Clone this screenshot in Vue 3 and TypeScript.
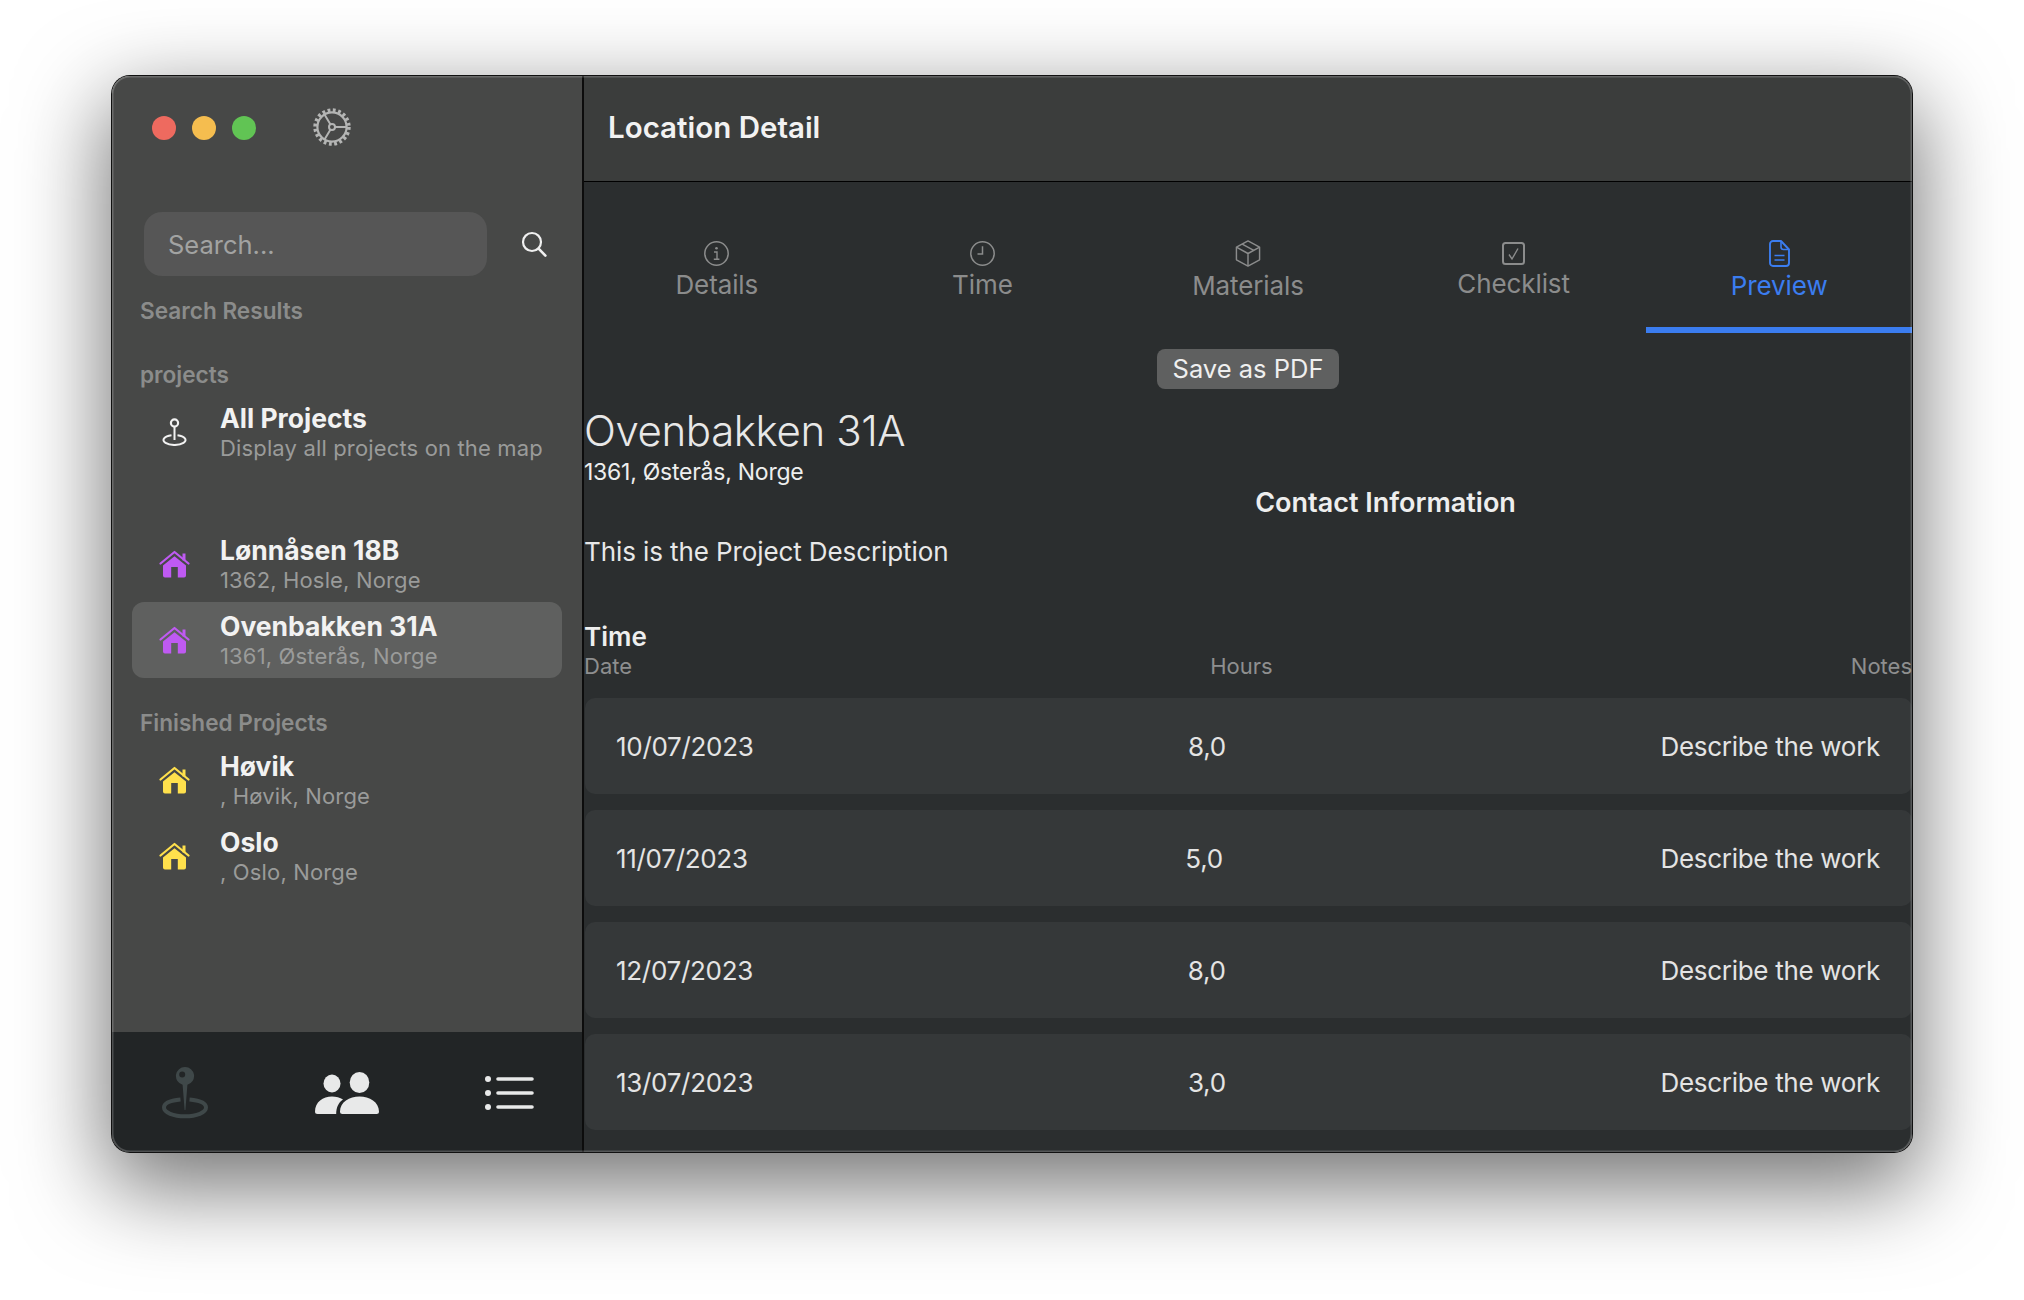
<script setup lang="ts">
interface Project {
  name: string
  address: string
  selected?: boolean
}

interface TimeRow {
  date: string
  hours: string
  notes: string
}

const activeProjects: Project[] = [
  { name: 'Lønnåsen 18B', address: '1362, Hosle, Norge' },
  { name: 'Ovenbakken 31A', address: '1361, Østerås, Norge', selected: true }
]

const finishedProjects: Project[] = [
  { name: 'Høvik', address: ', Høvik, Norge' },
  { name: 'Oslo', address: ', Oslo, Norge' }
]

const timeRows: TimeRow[] = [
  { date: '10/07/2023', hours: '8,0', notes: 'Describe the work' },
  { date: '11/07/2023', hours: '5,0', notes: 'Describe the work' },
  { date: '12/07/2023', hours: '8,0', notes: 'Describe the work' },
  { date: '13/07/2023', hours: '3,0', notes: 'Describe the work' }
]
</script>

<template>
  <div class="page">
    <div class="window">
      <aside class="sidebar">
        <div class="titlebar">
          <span class="light red"></span>
          <span class="light yellow"></span>
          <span class="light green"></span>
          <svg class="gear" width="38" height="38" viewBox="0 0 38 38" fill="none" stroke="#b4b5b4">
            <circle cx="19" cy="19" r="16.8" stroke-width="3.8" stroke-dasharray="2.8 2.5" />
            <circle cx="19" cy="19" r="14.6" stroke-width="2.2" />
            <circle cx="19" cy="19" r="3" stroke-width="2" />
            <path d="M22 19H33M17.5 16.4 11.5 6.5M17.5 21.6 11.5 31.5" stroke-width="2" />
          </svg>
        </div>

        <div class="search-row">
          <div class="search-box">Search...</div>
          <svg class="search-icon" width="26" height="26" viewBox="0 0 26 26" fill="none" stroke="#f0f0f0" stroke-width="2.2" stroke-linecap="round">
            <circle cx="11" cy="11" r="9" />
            <path d="M17.6 17.6 24.4 24.6" stroke-width="2.6" />
          </svg>
        </div>

        <div class="group-label first">Search Results</div>
        <div class="group-label projects">projects</div>

        <div class="project-row all-row">
          <span class="row-icon">
            <svg width="25" height="28" viewBox="0 0 25 28" fill="none" stroke="#f2f2f2">
              <circle cx="12.5" cy="5" r="3.6" stroke-width="2.2" />
              <path d="M12.5 9V22" stroke-width="2" />
              <path d="M9.5 17.2A11 5 0 1 0 15.5 17.2" stroke-width="2" />
            </svg>
          </span>
          <div>
            <div class="project-name">All Projects</div>
            <div class="project-address">Display all projects on the map</div>
          </div>
        </div>

        <div
          v-for="project in activeProjects"
          :key="project.name"
          class="project-row"
          :class="{ selected: project.selected }"
        >
          <span class="row-icon">
            <svg width="31" height="28" viewBox="0 0 31 28">
              <path d="M1.5 13.5 15.5 2 29.5 13.5" fill="none" stroke="#bf5af2" stroke-width="2.2" stroke-linecap="round" stroke-linejoin="round" />
              <path d="M23.5 3.5h3v7h-3z" fill="#bf5af2" />
              <path fill-rule="evenodd" d="M15.5 6.2 27 15.6V25.5a2 2 0 0 1-2 2H6a2 2 0 0 1-2-2V15.6ZM12.2 17v10.5h6.6V17Z" fill="#bf5af2" />
            </svg>
          </span>
          <div>
            <div class="project-name">{{ project.name }}</div>
            <div class="project-address">{{ project.address }}</div>
          </div>
        </div>

        <div class="group-label finished">Finished Projects</div>

        <div v-for="project in finishedProjects" :key="project.name" class="project-row">
          <span class="row-icon">
            <svg width="31" height="28" viewBox="0 0 31 28">
              <path d="M1.5 13.5 15.5 2 29.5 13.5" fill="none" stroke="#ffe04c" stroke-width="2.2" stroke-linecap="round" stroke-linejoin="round" />
              <path d="M23.5 3.5h3v7h-3z" fill="#ffe04c" />
              <path fill-rule="evenodd" d="M15.5 6.2 27 15.6V25.5a2 2 0 0 1-2 2H6a2 2 0 0 1-2-2V15.6ZM12.2 17v10.5h6.6V17Z" fill="#ffe04c" />
            </svg>
          </span>
          <div>
            <div class="project-name">{{ project.name }}</div>
            <div class="project-address">{{ project.address }}</div>
          </div>
        </div>

        <nav class="footer-bar">
          <svg width="46" height="52" viewBox="0 0 46 52" fill="none">
            <path fill-rule="evenodd" d="M23 0a9 9 0 0 1 2.4 17.7L23.4 43h-.8L20.6 17.7A9 9 0 0 1 23 0Zm-2.8 4.5a3 3 0 1 0 0 6 3 3 0 0 0 0-6Z" fill="#3f4849" />
            <path d="M18.5 32.6C8 33.6 2 36.5 2 40.6c0 5 9.4 8.6 21 8.6s21-3.6 21-8.6c0-4.1-6-7-16.5-8" stroke="#3f4849" stroke-width="4" />
          </svg>
          <svg width="64" height="42" viewBox="0 0 64 42" fill="#e8e9e9">
            <ellipse cx="17" cy="11.5" rx="8.5" ry="9" />
            <ellipse cx="44.5" cy="10.5" rx="9.8" ry="10.5" />
            <path d="M0 39.5C0 30 8 24.5 17 24.5c4 0 8 1 11 3-4.5 3-6.8 8-6.8 14.5H2.5A2.5 2.5 0 0 1 0 39.5Z" />
            <path d="M25 39.5C25 30 34.5 24.5 44.5 24.5S64 30 64 39.5a2.5 2.5 0 0 1-2.5 2.5h-34A2.5 2.5 0 0 1 25 39.5Z" />
          </svg>
          <svg width="50" height="34" viewBox="0 0 50 34" fill="#e8e9e9" stroke="#e8e9e9">
            <circle cx="3" cy="3" r="3" stroke="none" />
            <circle cx="3" cy="17" r="3" stroke="none" />
            <circle cx="3" cy="31" r="3" stroke="none" />
            <path d="M13 3H47M13 17H47M13 31H47" stroke-width="3.6" stroke-linecap="round" />
          </svg>
        </nav>
      </aside>

      <main class="detail">
        <header class="detail-header">Location Detail</header>

        <div class="tabs">
          <div class="tab">
            <svg width="27" height="25" viewBox="0 0 27 25" fill="none" stroke="#8b8c8c" stroke-width="1.5">
              <circle cx="13.5" cy="12.5" r="11.7" />
              <circle cx="13.5" cy="7.2" r="1.3" fill="#8b8c8c" stroke="none" />
              <path d="M11 11h3v7M10.8 18.2h5.6" stroke-width="1.4" />
            </svg>
            <span>Details</span>
          </div>
          <div class="tab">
            <svg width="27" height="25" viewBox="0 0 27 25" fill="none" stroke="#8b8c8c" stroke-width="1.5">
              <circle cx="13.5" cy="12.5" r="11.7" />
              <path d="M13.5 5.2V13H8.5" />
            </svg>
            <span>Time</span>
          </div>
          <div class="tab">
            <svg width="26" height="27" viewBox="0 0 26 28" fill="none" stroke="#8b8c8c" stroke-width="1.5" stroke-linejoin="round">
              <path d="M13 1 25 7.5V20.5L13 27 1 20.5V7.5Z" />
              <path d="M1.4 7.6 13 14 24.6 7.6M13 14V26.6M7 4.2 19 10.8" />
            </svg>
            <span>Materials</span>
          </div>
          <div class="tab">
            <svg width="23" height="23" viewBox="0 0 23 23" fill="none" stroke="#8b8c8c">
              <rect x="1" y="1" width="21" height="21" rx="2.5" stroke-width="2" />
              <path d="M7 12.5 10 17 16 6.5" stroke-width="1.4" />
            </svg>
            <span>Checklist</span>
          </div>
          <div class="tab active">
            <svg width="21" height="27" viewBox="0 0 21 27" fill="none" stroke="#3b7df0" stroke-width="1.9" stroke-linejoin="round">
              <path d="M4 1H12L20 9.5V23a3 3 0 0 1-3 3H4a3 3 0 0 1-3-3V4a3 3 0 0 1 3-3Z" />
              <path d="M12 1V7a2.5 2.5 0 0 0 2.5 2.5H20M5.5 15.5H15.5M5.5 20H15.5" stroke-width="1.6" />
            </svg>
            <span>Preview</span>
          </div>
        </div>

        <div class="preview">
          <button class="pdf-button">Save as PDF</button>

          <h1 class="preview-title">Ovenbakken 31A</h1>
          <div class="preview-address">1361, Østerås, Norge</div>
          <h3 class="contact-title">Contact Information</h3>
          <p class="description">This is the Project Description</p>

          <div class="time-title">Time</div>
          <div class="time-head">
            <span>Date</span>
            <span>Hours</span>
            <span>Notes</span>
          </div>

          <div class="time-list">
            <div v-for="row in timeRows" :key="row.date" class="time-row">
              <span>{{ row.date }}</span>
              <span>{{ row.hours }}</span>
              <span>{{ row.notes }}</span>
            </div>
          </div>
        </div>
      </main>
    </div>
  </div>
</template>

<style scoped>
.page {
  width: 2024px;
  height: 1300px;
  box-sizing: border-box;
  padding: 76px 0 0 112px;
  overflow: hidden;
  background: #ffffff;
  font-family: Inter, "Liberation Sans", sans-serif;
}

.window {
  position: relative;
  display: flex;
  width: 1800px;
  height: 1076px;
  border-radius: 18px;
  overflow: hidden;
  box-shadow:
    0 0 0 1px #111111,
    0 30px 88px 6px rgba(0, 0, 0, 0.55);
}

/* thin light edge just inside the black outline */
.window::after {
  content: '';
  position: absolute;
  inset: 0;
  border-radius: 18px;
  box-shadow: inset 0 0 0 1.5px rgba(255, 255, 255, 0.2);
  pointer-events: none;
}

.sidebar {
  display: flex;
  flex-direction: column;
  flex: none;
  box-sizing: border-box;
  width: 472px;
  background: #474847;
  border-right: 2px solid #0c0c0c;
}

.titlebar {
  display: flex;
  align-items: center;
  flex: none;
  height: 104px;
  padding: 0 0 0 40px;
}

.light {
  width: 24px;
  height: 24px;
  margin-right: 16px;
  border-radius: 50%;
}

.red {
  background: #ee6a5f;
}

.yellow {
  background: #f5bd4f;
}

.green {
  background: #61c454;
}

.gear {
  margin: -2px 0 0 41px;
}

.search-row {
  display: flex;
  align-items: center;
  margin: 32px 0 0 32px;
}

.search-box {
  box-sizing: border-box;
  width: 343px;
  height: 64px;
  padding: 1px 0 0 24px;
  border-radius: 18px;
  background: #565656;
  color: #a2a3a2;
  font-size: 25.5px;
  line-height: 64px;
}

.search-icon {
  margin-left: 34px;
}

.group-label {
  padding-left: 28px;
  color: #8b8c8b;
  font-size: 22.6px;
  font-weight: 600;
  line-height: 30px;
}

.first {
  margin-top: 20px;
}

.projects {
  margin: 34px 0 3px;
}

.finished {
  margin: 30px 0 4px;
}

.project-row {
  display: flex;
  align-items: center;
  flex: none;
  box-sizing: border-box;
  height: 76px;
  margin: 0 20px;
  padding-left: 27px;
  border-radius: 12px;
}

.all-row {
  margin-bottom: 57px;
  padding-top: 2px;
}

.selected {
  background: #5f605f;
}

.row-icon {
  display: flex;
  justify-content: center;
  flex: none;
  width: 31px;
  margin-right: 30px;
}

.project-name {
  margin-top: 3px;
  color: #f2f2f2;
  font-size: 26.5px;
  font-weight: 700;
  line-height: 29px;
}

.project-address {
  color: #9a9b9a;
  font-size: 22px;
  letter-spacing: 0.15px;
  line-height: 30px;
}

.footer-bar {
  display: flex;
  align-items: center;
  justify-content: space-between;
  flex: none;
  box-sizing: border-box;
  height: 120px;
  margin-top: auto;
  padding: 2px 47px 0 50px;
  background: #222526;
}

.detail {
  display: flex;
  flex-direction: column;
  flex: 1;
  min-width: 0;
  background: #2b2e2f;
}

.detail-header {
  flex: none;
  box-sizing: border-box;
  height: 105.5px;
  padding: 33px 0 0 24px;
  border-bottom: 1.5px solid #000000;
  background: #3b3d3c;
  color: #f2f2f2;
  font-size: 29.5px;
  font-weight: 600;
  line-height: 36px;
}

.tabs {
  display: grid;
  grid-template-columns: repeat(5, 1fr);
  flex: none;
}

.tab {
  display: flex;
  flex-direction: column;
  align-items: center;
  justify-content: center;
  gap: 4px;
  box-sizing: border-box;
  height: 151.5px;
  padding-top: 32px;
  border-bottom: 6px solid transparent;
  color: #8b8c8c;
  font-size: 26px;
  letter-spacing: -0.1px;
  line-height: 30px;
}

.active {
  border-bottom-color: #3b7df0;
  color: #3b7df0;
}

.preview {
  display: flex;
  flex-direction: column;
}

.pdf-button {
  align-self: center;
  width: 182px;
  height: 40px;
  margin-top: 16px;
  padding: 0;
  border: 0;
  border-radius: 8px;
  background: #5f6060;
  color: #efefef;
  font-family: inherit;
  font-size: 25.5px;
  line-height: 40px;
}

.preview-title {
  margin: 15px 0 0;
  color: #e8e8e8;
  font-size: 42px;
  font-weight: 300;
  letter-spacing: -0.4px;
  line-height: 54px;
}

.preview-address {
  margin-top: -1px;
  color: #eeeeee;
  font-size: 23px;
  letter-spacing: -0.25px;
  line-height: 30px;
}

.contact-title {
  margin: 0;
  padding: 1px 0 0 275px;
  color: #eeeeee;
  font-size: 27px;
  font-weight: 600;
  line-height: 30px;
  text-align: center;
}

.description {
  margin: 18px 0 0;
  color: #e8e8e8;
  font-size: 26px;
  letter-spacing: -0.1px;
  line-height: 32px;
}

.time-title {
  margin-top: 54px;
  color: #eeeeee;
  font-size: 26px;
  font-weight: 600;
  line-height: 30px;
}

.time-head {
  display: flex;
  justify-content: space-between;
  margin-top: -1px;
  color: #8e8f8f;
  font-size: 22px;
  line-height: 30px;
}

.time-list {
  display: flex;
  flex-direction: column;
  gap: 16px;
  margin-top: 17px;
}

.time-row {
  display: flex;
  align-items: center;
  justify-content: space-between;
  flex: none;
  height: 96px;
  padding: 0 32px 0 31px;
  margin-left: 1px;
  border-radius: 10px;
  background: #353839;
  color: #e4e4e4;
  font-size: 26px;
  letter-spacing: -0.3px;
}
</style>
